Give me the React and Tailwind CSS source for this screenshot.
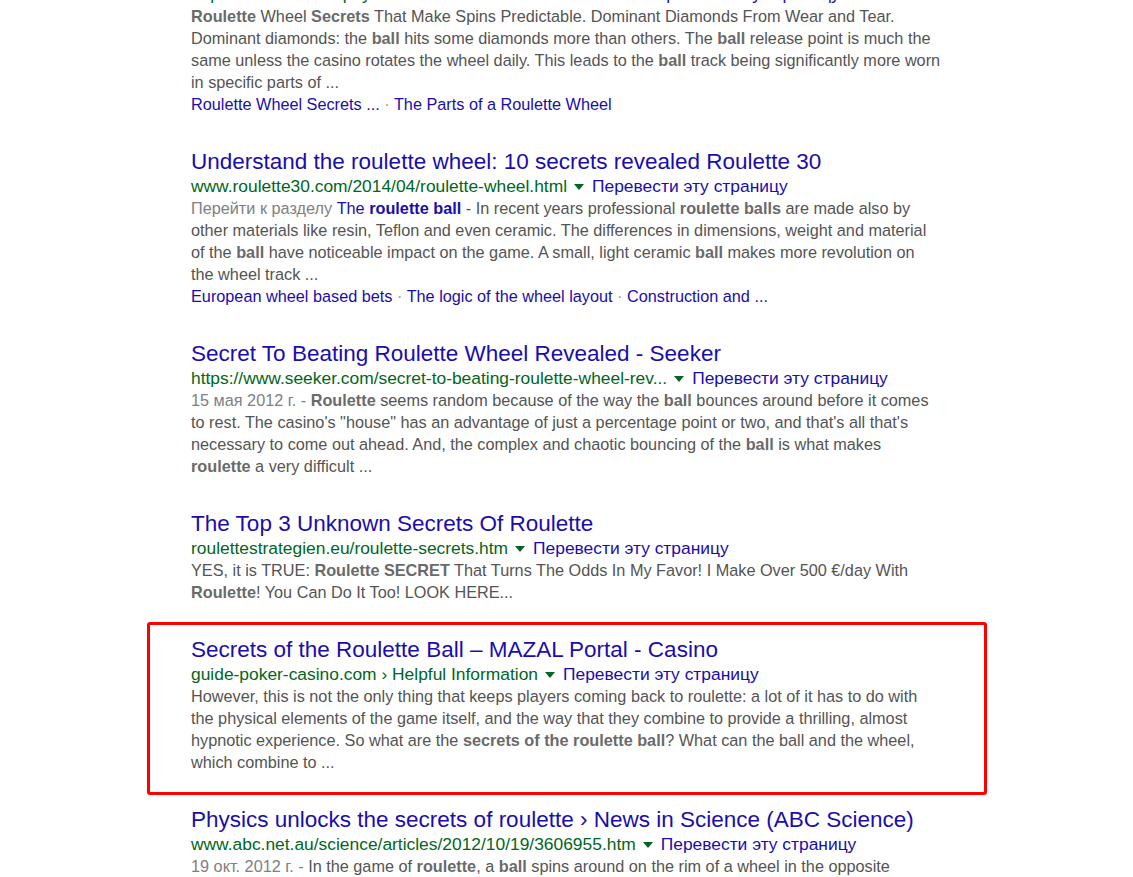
const B = ({ children }) => <b className="font-bold text-[#6a6a6a]">{children}</b>;

const Dot = () => <span className="text-[#9a9a9a]"> · </span>;

const Result = ({ title, url, crumb, lines, sitelinks, boxed }) => {
  return (
    <div className="relative">
      {boxed && (
        <div className="absolute -top-[13px] -bottom-[22px] -left-[44px] -right-[44px] border-[3px] border-[#ff0000] rounded-[3px] pointer-events-none" />
      )}
      <div className="relative top-px text-[22.5px] leading-[28px] text-[#1a0dab] whitespace-nowrap">{title}</div>
      <div className="flex items-center h-[22px] text-[17.4px] whitespace-nowrap">
        <span className="text-[#006621]">{url}</span>
        {crumb && <span className="text-[#006621]">&nbsp;› {crumb}</span>}
        <span className="ml-[7px] mr-[8px] mt-[1px] w-0 h-0 border-t-[6px] border-t-[#006621] border-x-[5px] border-x-transparent" />
        <span className="text-[#1a0dab]">Перевести эту страницу</span>
      </div>
      <div className="text-[16.25px] leading-[22px] text-[#545454]">
        {lines.map((line, i) => (
          <div key={i} className="whitespace-nowrap">{line}</div>
        ))}
      </div>
      {sitelinks && (
        <div className="text-[16.25px] leading-[22px] text-[#1a0dab] whitespace-nowrap">
          {sitelinks.map((s, i) => (
            <span key={i}>
              {i > 0 && <Dot />}
              {s}
            </span>
          ))}
        </div>
      )}
    </div>
  );
};

export default function App() {
  return (
    <div className="h-[877px] overflow-hidden bg-white" style={{ fontFamily: '"Liberation Sans", Arial, sans-serif' }}>
      <div className="ml-[191px] w-[752px] -mt-[45px] flex flex-col gap-[32px]">
        <Result
          title="Roulette Wheel Secrets: Physics of the Spin and the Ball"
          url="https://www.roulettephysics.com/roulette-wheel-secrets/"
          lines={[
            <><B>Roulette</B> Wheel <B>Secrets</B> That Make Spins Predictable. Dominant Diamonds From Wear and Tear.</>,
            <>Dominant diamonds: the <B>ball</B> hits some diamonds more than others. The <B>ball</B> release point is much the</>,
            <>same unless the casino rotates the wheel daily. This leads to the <B>ball</B> track being significantly more worn</>,
            <>in specific parts of ...</>,
          ]}
          sitelinks={['Roulette Wheel Secrets ...', 'The Parts of a Roulette Wheel']}
        />
        <Result
          title="Understand the roulette wheel: 10 secrets revealed Roulette 30"
          url="www.roulette30.com/2014/04/roulette-wheel.html"
          lines={[
            <><span className="text-[#808080]">Перейти к разделу </span><span className="text-[#1a0dab]">The <b className="font-bold">roulette ball</b></span> - In recent years professional <B>roulette balls</B> are made also by</>,
            <>other materials like resin, Teflon and even ceramic. The differences in dimensions, weight and material</>,
            <>of the <B>ball</B> have noticeable impact on the game. A small, light ceramic <B>ball</B> makes more revolution on</>,
            <>the wheel track ...</>,
          ]}
          sitelinks={['European wheel based bets', 'The logic of the wheel layout', 'Construction and ...']}
        />
        <Result
          title="Secret To Beating Roulette Wheel Revealed - Seeker"
          url="https://www.seeker.com/secret-to-beating-roulette-wheel-rev..."
          lines={[
            <><span className="text-[#808080]">15 мая 2012 г. - </span><B>Roulette</B> seems random because of the way the <B>ball</B> bounces around before it comes</>,
            <>to rest. The casino's "house" has an advantage of just a percentage point or two, and that's all that's</>,
            <>necessary to come out ahead. And, the complex and chaotic bouncing of the <B>ball</B> is what makes</>,
            <><B>roulette</B> a very difficult ...</>,
          ]}
        />
        <Result
          title="The Top 3 Unknown Secrets Of Roulette"
          url="roulettestrategien.eu/roulette-secrets.htm"
          lines={[
            <>YES, it is TRUE: <B>Roulette SECRET</B> That Turns The Odds In My Favor! I Make Over 500 €/day With</>,
            <><B>Roulette</B>! You Can Do It Too! LOOK HERE...</>,
          ]}
        />
        <Result
          boxed
          title="Secrets of the Roulette Ball – MAZAL Portal - Casino"
          url="guide-poker-casino.com"
          crumb="Helpful Information"
          lines={[
            <>However, this is not the only thing that keeps players coming back to roulette: a lot of it has to do with</>,
            <>the physical elements of the game itself, and the way that they combine to provide a thrilling, almost</>,
            <>hypnotic experience. So what are the <B>secrets of the roulette ball</B>? What can the ball and the wheel,</>,
            <>which combine to ...</>,
          ]}
        />
        <Result
          title="Physics unlocks the secrets of roulette › News in Science (ABC Science)"
          url="www.abc.net.au/science/articles/2012/10/19/3606955.htm"
          lines={[
            <><span className="text-[#808080]">19 окт. 2012 г. - </span>In the game of <B>roulette</B>, a <B>ball</B> spins around on the rim of a wheel in the opposite</>,
            <>direction to the wheel's spin. Players bet on where the <B>ball</B> will come to rest ...</>,
          ]}
        />
      </div>
    </div>
  );
}
